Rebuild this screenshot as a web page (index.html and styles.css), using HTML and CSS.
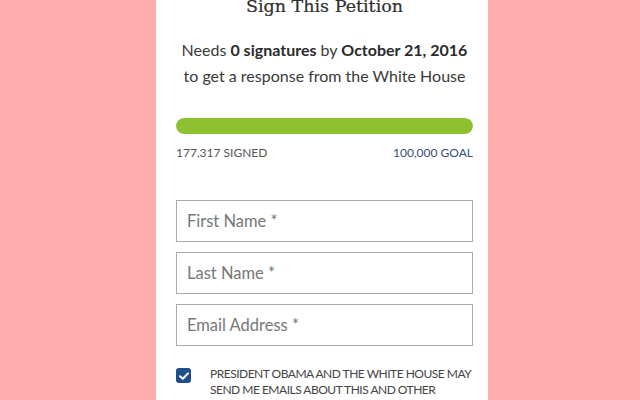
FILE: index.html
```html
<!DOCTYPE html>
<html lang="en">
<head>
<meta charset="utf-8">
<title>Sign This Petition</title>
<link rel="stylesheet" href="styles.css">
</head>
<body>
<main class="panel">
  <h2 class="title">Sign This Petition</h2>
  <p class="intro">Needs <strong>0 signatures</strong> by <strong>October 21, 2016</strong><br>to get a response from the White House</p>
  <div class="progress"><div class="progress-fill" style="width:100%"></div></div>
  <div class="counts">
    <span class="signed">177,317 SIGNED</span>
    <span class="goal">100,000 GOAL</span>
  </div>
  <form class="form">
    <input class="field" type="text" placeholder="First Name *">
    <input class="field" type="text" placeholder="Last Name *">
    <input class="field" type="email" placeholder="Email Address *">
    <label class="optin">
      <span class="check"><svg width="10" height="8" viewBox="0 0 10 8"><path d="M1 4.2 L3.8 6.8 L9 1.4" fill="none" stroke="#fff" stroke-width="2" stroke-linecap="round" stroke-linejoin="round"/></svg></span>
      <span class="optin-text">PRESIDENT OBAMA AND THE WHITE HOUSE MAY SEND ME EMAILS ABOUT THIS AND OTHER ISSUES</span>
    </label>
  </form>
</main>
</body>
</html>
```
FILE: styles.css
```css
html, body {
  margin: 0;
  padding: 0;
  height: 100%;
  overflow: hidden;
}
body {
  background: #ffadad;
  font-family: "Lato", "Liberation Sans", sans-serif;
  color: #333;
}
.panel {
  width: 297px;
  margin: 0 auto;
  padding: 0 15px 40px 20px;
  background: #fff;
  min-height: 100%;
  box-sizing: content-box;
  position: relative;
  left: 2px;
}
.title {
  margin: -7px 0 0;
  font-family: "DejaVu Serif", "Liberation Serif", serif;
  font-weight: normal;
  font-size: 17.5px;
  line-height: 26px;
  text-align: center;
  color: #2e2e2e;
  -webkit-text-stroke: 0.2px #2e2e2e;
}
.intro {
  margin: 18px 0 0;
  font-size: 16px;
  line-height: 26px;
  text-align: center;
  color: #3a3a3a;
}
.intro strong { font-weight: bold; color: #2b2b2b; }
.progress {
  margin-top: 29px;
  height: 16px;
  border-radius: 8px;
  background: #e5e5e5;
  overflow: hidden;
}
.progress-fill {
  height: 100%;
  background: #8dc12f;
  border-radius: 8px;
}
.counts {
  display: flex;
  justify-content: space-between;
  margin-top: 12px;
  font-size: 12px;
  line-height: 14px;
}
.signed { color: #555; }
.goal { color: #34507a; }
.form {
  margin-top: 40px;
  display: flex;
  flex-direction: column;
  gap: 10px;
}
.field {
  display: block;
  width: 100%;
  height: 42px;
  box-sizing: border-box;
  border: 1px solid #aaa;
  border-radius: 0;
  padding: 0 10px;
  font-family: "Lato", "Liberation Sans", sans-serif;
  font-size: 16.5px;
  color: #333;
  background: #fff;
  outline: none;
}
.field::placeholder { color: #777; }
.optin {
  display: flex;
  align-items: flex-start;
  gap: 19px;
  margin-top: 2px;
}
.check {
  flex: none;
  width: 15px;
  height: 15px;
  margin-top: 10px;
  border-radius: 3px;
  background: #1f4e8c;
  display: flex;
  align-items: center;
  justify-content: center;
}
.optin-text {
  font-size: 12px;
  letter-spacing: -0.5px;
  line-height: 16px;
  color: #444;
  padding-top: 8px;
}
```
